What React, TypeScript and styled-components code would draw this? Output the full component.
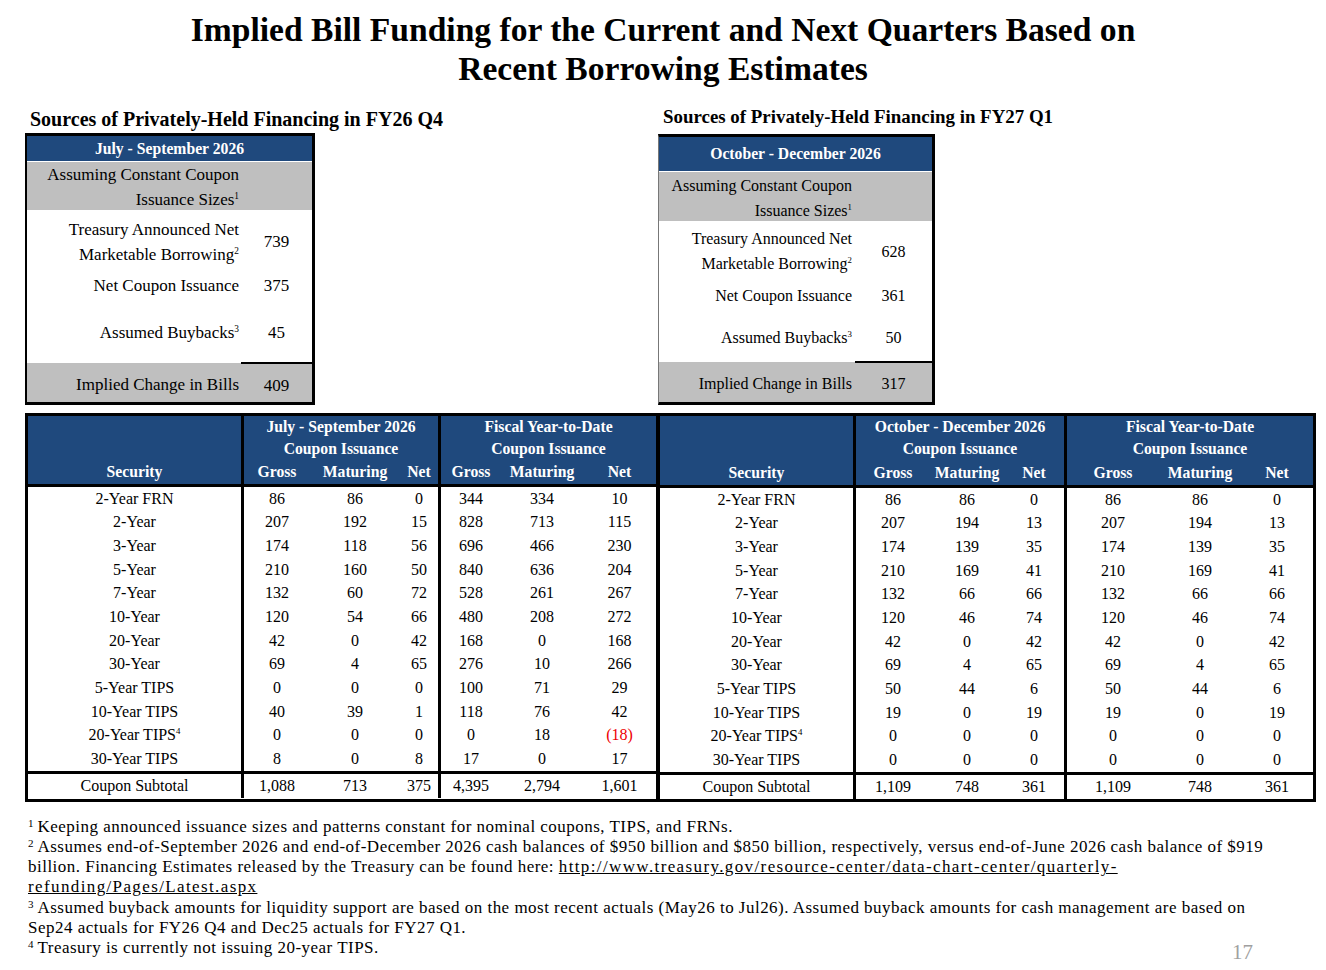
import React from "react";
import styled, { createGlobalStyle } from "styled-components";

const BLUE = "#1f497d";
const GRAY = "#bfbfbf";

const GlobalStyle = createGlobalStyle`
  html, body { margin: 0; padding: 0; background: #fff; }
  body {
    font-family: "Liberation Serif", "Times New Roman", serif;
    color: #000;
  }
`;

const Page = styled.div`
  width: 1326px;
  height: 970px;
  overflow: hidden;
  box-sizing: border-box;
  padding-top: 10px;
`;

const Title = styled.h1`
  margin: 0;
  text-align: center;
  font-size: 33.6px;
  line-height: 39px;
  font-weight: bold;
`;

const TopRow = styled.div`
  display: flex;
  align-items: flex-start;
  padding-left: 25px;
  height: 317px;
`;

const Column = styled.div<{ $w: number; $top: number }>`
  width: ${(p) => p.$w}px;
  padding-top: ${(p) => p.$top}px;
`;

const Subtitle = styled.h2<{ $size: number; $gap: number }>`
  margin: 0 0 ${(p) => p.$gap}px 5px;
  font-size: ${(p) => p.$size}px;
  line-height: 24px;
  font-weight: bold;
  white-space: nowrap;
`;

const SmallBox = styled.div<{ $w: number; $left: string }>`
  width: ${(p) => p.$w}px;
  box-sizing: border-box;
  border: 3px solid #000;
  border-left: ${(p) => p.$left};
  background: #fff;
`;

const BoxHead = styled.div<{ $h: number }>`
  height: ${(p) => p.$h}px;
  display: flex;
  align-items: center;
  justify-content: center;
  background: ${BLUE};
  color: #fff;
  font-weight: bold;
  font-size: 15.7px;
  border-bottom: 1px solid #fff;
`;

const BoxRow = styled.div<{ $cols: string; $h: number; $gray?: boolean; $size: number }>`
  display: grid;
  grid-template-columns: ${(p) => p.$cols};
  height: ${(p) => p.$h}px;
  background: ${(p) => (p.$gray ? GRAY : "#fff")};
  font-size: ${(p) => p.$size}px;
  line-height: 25px;
`;

const Label = styled.div<{ $pr: number; $pt?: number }>`
  align-self: center;
  text-align: right;
  white-space: nowrap;
  padding-right: ${(p) => p.$pr}px;
  padding-top: ${(p) => p.$pt ?? 0}px;
`;

const HeadLabel = styled(Label)`
  align-self: start;
`;

const Value = styled.div<{ $pt?: number; $rule?: boolean }>`
  display: flex;
  align-items: center;
  justify-content: center;
  padding-top: ${(p) => p.$pt ?? 0}px;
  border-top: ${(p) => (p.$rule ? "2px solid #000" : "none")};
  margin-top: ${(p) => (p.$rule ? "-1px" : "0")};
`;

const Sup = styled.span`
  font-size: 0.55em;
  vertical-align: 0.65em;
  line-height: 0;
`;

const TablesRow = styled.div`
  display: flex;
  padding-left: 25px;
  margin-top: 8px;
`;

const BigTable = styled.div<{ $l: number; $r: number }>`
  border: 3px solid #000;
  border-left-width: ${(p) => p.$l}px;
  border-right-width: ${(p) => p.$r}px;
  background: #fff;
`;

const Head = styled.div<{ $cols: string; $rows: string }>`
  display: grid;
  grid-template-columns: ${(p) => p.$cols};
  grid-template-rows: ${(p) => p.$rows};
  background: ${BLUE};
  border-bottom: 3px solid #000;
  color: #fff;
  font-weight: bold;
  font-size: 15.7px;
`;

const HCell = styled.div<{ $sep?: boolean; $row: string; $col: string }>`
  grid-row: ${(p) => p.$row};
  grid-column: ${(p) => p.$col};
  display: flex;
  align-items: center;
  justify-content: center;
  white-space: nowrap;
  border-right: ${(p) => (p.$sep ? "3px solid #000" : "none")};
`;

const Row = styled.div<{ $cols: string; $h: number }>`
  display: grid;
  grid-template-columns: ${(p) => p.$cols};
  height: ${(p) => p.$h}px;
  font-size: 16px;
`;

const TotalRow = styled(Row)`
  border-top: 3px solid #000;
`;

const Cell = styled.div<{ $sep?: boolean; $red?: boolean }>`
  display: flex;
  align-items: center;
  justify-content: center;
  white-space: nowrap;
  color: ${(p) => (p.$red ? "#ee0000" : "#000")};
  border-right: ${(p) => (p.$sep ? "3px solid #000" : "none")};
`;

const Notes = styled.div`
  margin-top: 15px;
  padding-left: 28px;
  font-size: 17px;
  letter-spacing: 0.48px;
  line-height: 20.2px;
`;

const NoteLine = styled.div`
  white-space: nowrap;
`;

const Link = styled.a`
  color: #000;
  text-decoration: underline;
  letter-spacing: 1.38px;
`;

const LastLine = styled.div`
  display: flex;
  align-items: flex-start;
`;

const PageNum = styled.div`
  margin-left: auto;
  margin-right: 73px;
  padding-top: 2px;
  font-size: 21px;
  letter-spacing: 0;
  line-height: 24px;
  color: #a0a0a0;
`;

const NoteSup = styled.span`
  font-size: 11px;
  letter-spacing: 0;
  vertical-align: 5px;
  line-height: 0;
  margin-right: 4px;
`;

type TableSpec = {
  cols: string;
  headRows: string;
  period: string;
  rows: string[][];
  total: string[];
  l: number;
  r: number;
};

const sup4 = "\u2074";

const leftSpec: TableSpec = {
  cols: "216px 66px 90px 41px 60px 82px 73px",
  headRows: "22px 22px 24px",
  period: "July - September 2026",
  l: 3,
  r: 2,
  rows: [
    ["2-Year FRN", "86", "86", "0", "344", "334", "10"],
    ["2-Year", "207", "192", "15", "828", "713", "115"],
    ["3-Year", "174", "118", "56", "696", "466", "230"],
    ["5-Year", "210", "160", "50", "840", "636", "204"],
    ["7-Year", "132", "60", "72", "528", "261", "267"],
    ["10-Year", "120", "54", "66", "480", "208", "272"],
    ["20-Year", "42", "0", "42", "168", "0", "168"],
    ["30-Year", "69", "4", "65", "276", "10", "266"],
    ["5-Year TIPS", "0", "0", "0", "100", "71", "29"],
    ["10-Year TIPS", "40", "39", "1", "118", "76", "42"],
    ["20-Year TIPS" + sup4, "0", "0", "0", "0", "18", "(18)"],
    ["30-Year TIPS", "8", "0", "8", "17", "0", "17"],
  ],
  total: ["Coupon Subtotal", "1,088", "713", "375", "4,395", "2,794", "1,601"],
};

const rightSpec: TableSpec = {
  cols: "196px 74px 74px 63px 92px 82px 72px",
  headRows: "21px 24px 24px",
  period: "October - December 2026",
  l: 2,
  r: 3,
  rows: [
    ["2-Year FRN", "86", "86", "0", "86", "86", "0"],
    ["2-Year", "207", "194", "13", "207", "194", "13"],
    ["3-Year", "174", "139", "35", "174", "139", "35"],
    ["5-Year", "210", "169", "41", "210", "169", "41"],
    ["7-Year", "132", "66", "66", "132", "66", "66"],
    ["10-Year", "120", "46", "74", "120", "46", "74"],
    ["20-Year", "42", "0", "42", "42", "0", "42"],
    ["30-Year", "69", "4", "65", "69", "4", "65"],
    ["5-Year TIPS", "50", "44", "6", "50", "44", "6"],
    ["10-Year TIPS", "19", "0", "19", "19", "0", "19"],
    ["20-Year TIPS" + sup4, "0", "0", "0", "0", "0", "0"],
    ["30-Year TIPS", "0", "0", "0", "0", "0", "0"],
  ],
  total: ["Coupon Subtotal", "1,109", "748", "361", "1,109", "748", "361"],
};

const SecName: React.FC<{ name: string }> = ({ name }) =>
  name.endsWith(sup4) ? (
    <span>
      {name.slice(0, -1)}
      <Sup>4</Sup>
    </span>
  ) : (
    <span>{name}</span>
  );

const IssuanceTable: React.FC<{ spec: TableSpec }> = ({ spec }) => (
  <BigTable $l={spec.l} $r={spec.r}>
    <Head $cols={spec.cols} $rows={spec.headRows}>
      <HCell $row="1 / 3" $col="1" $sep />
      <HCell $row="3" $col="1" $sep>
        Security
      </HCell>
      <HCell $row="1" $col="2 / 5" $sep>
        {spec.period}
      </HCell>
      <HCell $row="2" $col="2 / 5" $sep>
        Coupon Issuance
      </HCell>
      <HCell $row="1" $col="5 / 8">
        Fiscal Year-to-Date
      </HCell>
      <HCell $row="2" $col="5 / 8">
        Coupon Issuance
      </HCell>
      {["Gross", "Maturing", "Net", "Gross", "Maturing", "Net"].map((h, i) => (
        <HCell key={i} $row="3" $col={String(i + 2)} $sep={i === 2}>
          {h}
        </HCell>
      ))}
    </Head>
    {spec.rows.map((r, ri) => (
      <Row key={ri} $cols={spec.cols} $h={23.67}>
        {r.map((v, ci) => (
          <Cell key={ci} $sep={ci === 0 || ci === 3} $red={v.startsWith("(")}>
            {ci === 0 ? <SecName name={v} /> : v}
          </Cell>
        ))}
      </Row>
    ))}
    <TotalRow $cols={spec.cols} $h={24}>
      {spec.total.map((v, ci) => (
        <Cell key={ci} $sep={ci === 0 || ci === 3}>
          {v}
        </Cell>
      ))}
    </TotalRow>
  </BigTable>
);

export default function App() {
  return (
    <Page>
      <GlobalStyle />
      <Title>
        Implied Bill Funding for the Current and Next Quarters Based on
        <br />
        Recent Borrowing Estimates
      </Title>

      <TopRow>
        <Column $w={633} $top={19}>
          <Subtitle $size={20} $gap={2}>
            Sources of Privately-Held Financing in FY26 Q4
          </Subtitle>
          <SmallBox $w={290} $left="2px solid #000">
            <BoxHead $h={25}>July - September 2026</BoxHead>
            <BoxRow $cols="214px 71px" $h={48} $gray $size={17}>
              <HeadLabel $pr={2} $pt={0}>
                Assuming Constant Coupon
                <br />
                Issuance Sizes<Sup>1</Sup>
              </HeadLabel>
            </BoxRow>
            <BoxRow $cols="214px 71px" $h={58} $size={17}>
              <Label $pr={2} $pt={5}>
                Treasury Announced Net
                <br />
                Marketable Borrowing<Sup>2</Sup>
              </Label>
              <Value $pt={5}>739</Value>
            </BoxRow>
            <BoxRow $cols="214px 71px" $h={34} $size={17}>
              <Label $pr={2}>Net Coupon Issuance</Label>
              <Value>375</Value>
            </BoxRow>
            <BoxRow $cols="214px 71px" $h={61} $size={17}>
              <Label $pr={2}>
                Assumed Buybacks<Sup>3</Sup>
              </Label>
              <Value>45</Value>
            </BoxRow>
            <BoxRow $cols="214px 71px" $h={39} $gray $size={17}>
              <Label $pr={2} $pt={4}>
                Implied Change in Bills
              </Label>
              <Value $pt={4} $rule>
                409
              </Value>
            </BoxRow>
          </SmallBox>
        </Column>

        <Column $w={660} $top={17}>
          <Subtitle $size={18.9} $gap={5}>
            Sources of Privately-Held Financing in FY27 Q1
          </Subtitle>
          <SmallBox $w={277} $left="1px solid #777">
            <BoxHead $h={34}>October - December 2026</BoxHead>
            <BoxRow $cols="196px 77px" $h={49} $gray $size={16}>
              <HeadLabel $pr={3} $pt={1}>
                Assuming Constant Coupon
                <br />
                Issuance Sizes<Sup>1</Sup>
              </HeadLabel>
            </BoxRow>
            <BoxRow $cols="196px 77px" $h={60} $size={16}>
              <Label $pr={3}>
                Treasury Announced Net
                <br />
                Marketable Borrowing<Sup>2</Sup>
              </Label>
              <Value>628</Value>
            </BoxRow>
            <BoxRow $cols="196px 77px" $h={28} $size={16}>
              <Label $pr={3}>Net Coupon Issuance</Label>
              <Value>361</Value>
            </BoxRow>
            <BoxRow $cols="196px 77px" $h={53} $size={16}>
              <Label $pr={3} $pt={3}>
                Assumed Buybacks<Sup>3</Sup>
              </Label>
              <Value $pt={3}>50</Value>
            </BoxRow>
            <BoxRow $cols="196px 77px" $h={40} $gray $size={16}>
              <Label $pr={3} $pt={2}>
                Implied Change in Bills
              </Label>
              <Value $pt={2} $rule>
                317
              </Value>
            </BoxRow>
          </SmallBox>
        </Column>
      </TopRow>

      <TablesRow>
        <IssuanceTable spec={leftSpec} />
        <IssuanceTable spec={rightSpec} />
      </TablesRow>

      <Notes>
        <NoteLine>
          <NoteSup>1</NoteSup>Keeping announced issuance sizes and patterns constant for nominal
          coupons, TIPS, and FRNs.
        </NoteLine>
        <NoteLine>
          <NoteSup>2</NoteSup>Assumes end-of-September 2026 and end-of-December 2026 cash balances
          of $950 billion and $850 billion, respectively, versus end-of-June 2026 cash balance of
          $919
        </NoteLine>
        <NoteLine>
          billion. Financing Estimates released by the Treasury can be found here:{" "}
          <Link href="#">
            http://www.treasury.gov/resource-center/data-chart-center/quarterly-
          </Link>
        </NoteLine>
        <NoteLine>
          <Link href="#">refunding/Pages/Latest.aspx</Link>
        </NoteLine>
        <NoteLine>
          <NoteSup>3</NoteSup>Assumed buyback amounts for liquidity support are based on the most
          recent actuals (May26 to Jul26). Assumed buyback amounts for cash management are based on
        </NoteLine>
        <NoteLine>Sep24 actuals for FY26 Q4 and Dec25 actuals for FY27 Q1.</NoteLine>
        <LastLine>
          <NoteLine>
            <NoteSup>4</NoteSup>Treasury is currently not issuing 20-year TIPS.
          </NoteLine>
          <PageNum>17</PageNum>
        </LastLine>
      </Notes>
    </Page>
  );
}
